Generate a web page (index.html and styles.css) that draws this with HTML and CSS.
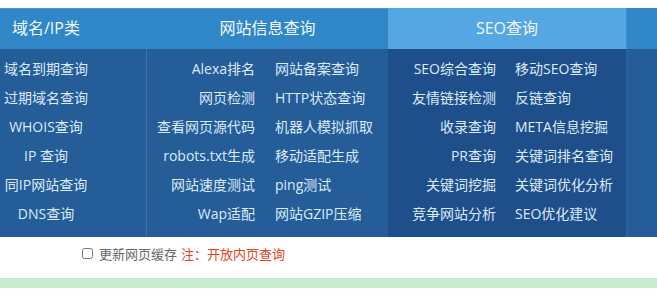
FILE: index.html
```html
<!DOCTYPE html>
<html lang="zh-CN">
<head>
<meta charset="utf-8">
<title>站长工具</title>
<link rel="stylesheet" href="styles.css">
</head>
<body>
<nav class="nav">
  <div class="col col-domain">
    <div class="col-head head-left">域名/IP类</div>
    <div class="col-body">
      <ul class="list list-center">
        <li>域名到期查询</li>
        <li>过期域名查询</li>
        <li>WHOIS查询</li>
        <li>IP 查询</li>
        <li>同IP网站查询</li>
        <li>DNS查询</li>
      </ul>
    </div>
  </div>
  <div class="col col-site">
    <div class="col-head">网站信息查询</div>
    <div class="col-body pair pair-site">
      <ul class="list list-right">
        <li>Alexa排名</li>
        <li>网页检测</li>
        <li>查看网页源代码</li>
        <li>robots.txt生成</li>
        <li>网站速度测试</li>
        <li>Wap适配</li>
      </ul>
      <ul class="list list-left">
        <li>网站备案查询</li>
        <li>HTTP状态查询</li>
        <li>机器人模拟抓取</li>
        <li>移动适配生成</li>
        <li>ping测试</li>
        <li>网站GZIP压缩</li>
      </ul>
    </div>
  </div>
  <div class="col col-seo">
    <div class="col-head">SEO查询</div>
    <div class="col-body pair pair-seo">
      <ul class="list list-right">
        <li>SEO综合查询</li>
        <li>友情链接检测</li>
        <li>收录查询</li>
        <li>PR查询</li>
        <li>关键词挖掘</li>
        <li>竞争网站分析</li>
      </ul>
      <ul class="list list-left">
        <li>移动SEO查询</li>
        <li>反链查询</li>
        <li>META信息挖掘</li>
        <li>关键词排名查询</li>
        <li>关键词优化分析</li>
        <li>SEO优化建议</li>
      </ul>
    </div>
  </div>
  <div class="col col-more">
    <div class="col-head"></div>
    <div class="col-body"></div>
  </div>
</nav>
<div class="options">
  <label class="cache"><input type="checkbox" class="check"><span class="cache-text">更新网页缓存</span></label>
  <span class="note">注：开放内页查询</span>
</div>
<div class="result-bar"></div>
</body>
</html>
```

FILE: styles.css
```css
html, body {
  margin: 0;
  padding: 0;
  background: #ffffff;
}

body {
  font-family: "Open Sans", "Noto Sans CJK SC", sans-serif;
}

.nav {
  margin-top: 8px;
  display: grid;
  grid-template-columns: 147px 241px 238px 1fr;
  height: 229px;
}

.col {
  display: flex;
  flex-direction: column;
}

.col-head {
  height: 41px;
  line-height: 41px;
  background: #2f87c7;
  color: #f2f7fc;
  font-size: 16px;
  text-align: center;
  box-shadow: inset 0 1px 0 #4a97cf;
}

.head-left {
  text-align: left;
  padding-left: 12px;
}

.col-body {
  flex: 1;
  background: #245d98;
  padding-top: 5px;
}

.col-domain .col-body {
  border-right: 1px solid #3d74aa;
}

.col-seo .col-head {
  background: #55a7e3;
  box-shadow: none;
}

.col-seo .col-body {
  background: #1f4f8b;
}

.col-more .col-head {
  box-shadow: inset 1px 0 0 #3f8fcc;
}

.col-more .col-body {
  box-shadow: inset 1px 0 0 #2c66a0;
}

.list {
  list-style: none;
  margin: 0;
  padding: 0;
  font-size: 14px;
  line-height: 29px;
  color: #dbeaf8;
  white-space: nowrap;
}

.list-center {
  width: 92px;
  text-align: center;
}

.pair {
  display: grid;
  column-gap: 20px;
}

.pair-site {
  grid-template-columns: 108px 1fr;
}

.pair-seo {
  grid-template-columns: 108px 1fr;
  column-gap: 19px;
}

.list-right {
  text-align: right;
}

.list-left {
  text-align: left;
}

.options {
  box-sizing: border-box;
  height: 41px;
  padding-bottom: 9px;
  display: flex;
  align-items: center;
  padding-left: 82px;
  font-family: "Noto Sans CJK SC", sans-serif;
  font-size: 13px;
}

.cache {
  display: flex;
  align-items: center;
  color: #666666;
}

.check {
  width: 11px;
  height: 11px;
  margin: 0 6px 0 0;
}

.note {
  margin-left: 4px;
  color: #e2441c;
}

.result-bar {
  height: 10px;
  background: #c8ecd0;
}
```
